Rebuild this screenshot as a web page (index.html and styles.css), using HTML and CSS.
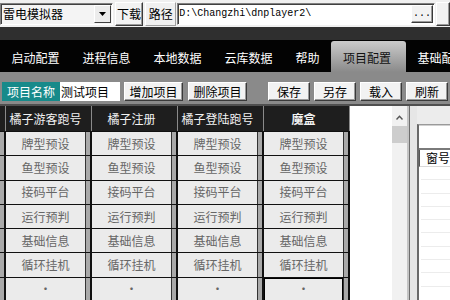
FILE: index.html
```html
<!DOCTYPE html>
<html>
<head>
    <meta charset="utf-8">
    <title>项目配置</title>
    <link rel="stylesheet" href="styles.css">
</head>
<body>
    <div class="topbar">
        <div class="combo">
            <span class="combo-text">雷电模拟器</span>
            <span class="combo-btn"><svg width="7" height="4" viewBox="0 0 7 4"><path d="M0 0H7L3.5 4Z" fill="#000"/></svg></span>
        </div>
        <button class="btn btn-dl">下载</button>
        <span class="path-label">路径</span>
        <div class="path">
            <span class="path-text">D:\Changzhi\dnplayer2\</span>
            <button class="btn btn-dots">...</button>
        </div>
        <button class="btn btn-more"></button>
    </div>
    <div class="band"></div>
    <div class="tabs">
        <div class="tab">启动配置</div>
        <div class="tab">进程信息</div>
        <div class="tab">本地数据</div>
        <div class="tab">云库数据</div>
        <div class="tab">帮助</div>
        <div class="tab active">项目配置</div>
        <div class="tab">基础配置</div>
    </div>
    <div class="toolbar">
        <span class="name-label">项目名称</span>
        <div class="name-input">测试项目</div>
        <button class="btn tb-btn">增加项目</button>
        <button class="btn tb-btn del">删除项目</button>
        <button class="btn tb-btn sm first">保存</button>
        <button class="btn tb-btn sm">另存</button>
        <button class="btn tb-btn sm">载入</button>
        <button class="btn tb-btn sm">刷新</button>
    </div>
    <div class="main">
        <div class="grid">
            <div class="row head">
                <div class="edge"></div>
                <div class="hcell">橘子游客跑号</div>
                <div class="hcell">橘子注册</div>
                <div class="hcell">橘子登陆跑号</div>
                <div class="hcell bold">魔盒</div>
            </div>
            <div class="row">
                <div class="edge"></div>
                <div class="cell"><div class="face">牌型预设</div></div>
                <div class="cell"><div class="face">牌型预设</div></div>
                <div class="cell"><div class="face">牌型预设</div></div>
                <div class="cell"><div class="face">牌型预设</div></div>
            </div>
            <div class="row">
                <div class="edge"></div>
                <div class="cell"><div class="face">鱼型预设</div></div>
                <div class="cell"><div class="face">鱼型预设</div></div>
                <div class="cell"><div class="face">鱼型预设</div></div>
                <div class="cell"><div class="face">鱼型预设</div></div>
            </div>
            <div class="row">
                <div class="edge"></div>
                <div class="cell"><div class="face">接码平台</div></div>
                <div class="cell"><div class="face">接码平台</div></div>
                <div class="cell"><div class="face">接码平台</div></div>
                <div class="cell"><div class="face">接码平台</div></div>
            </div>
            <div class="row">
                <div class="edge"></div>
                <div class="cell"><div class="face">运行预判</div></div>
                <div class="cell"><div class="face">运行预判</div></div>
                <div class="cell"><div class="face">运行预判</div></div>
                <div class="cell"><div class="face">运行预判</div></div>
            </div>
            <div class="row">
                <div class="edge"></div>
                <div class="cell"><div class="face">基础信息</div></div>
                <div class="cell"><div class="face">基础信息</div></div>
                <div class="cell"><div class="face">基础信息</div></div>
                <div class="cell"><div class="face">基础信息</div></div>
            </div>
            <div class="row">
                <div class="edge"></div>
                <div class="cell"><div class="face">循环挂机</div></div>
                <div class="cell"><div class="face">循环挂机</div></div>
                <div class="cell"><div class="face">循环挂机</div></div>
                <div class="cell"><div class="face">循环挂机</div></div>
            </div>
            <div class="row">
                <div class="edge"></div>
                <div class="cell"><div class="face">·</div></div>
                <div class="cell"><div class="face">·</div></div>
                <div class="cell"><div class="face">·</div></div>
                <div class="cell"><div class="face focus">·</div></div>
            </div>
        </div>
        <div class="blank"></div>
        <div class="vscroll">
            <div class="arrow"><svg width="7" height="5" viewBox="0 0 7 5"><path d="M0.5 4.5L3.5 1.2L6.5 4.5" fill="none" stroke="#555" stroke-width="1.4"/></svg></div>
            <div class="thumb"></div>
        </div>
        <div class="splitter"></div>
        <div class="side">
            <div class="side-box">
                <div class="side-input"></div>
                <div class="list-head">窗号</div>
                <div class="list">
                    <div class="li"></div>
                    <div class="li"></div>
                    <div class="li"></div>
                    <div class="li"></div>
                    <div class="li"></div>
                    <div class="li"></div>
                    <div class="li"></div>
                    <div class="li"></div>
                    <div class="li"></div>
                </div>
            </div>
        </div>
    </div>
</body>
</html>
```
FILE: styles.css
```css
* {
    box-sizing: border-box;
}

html,
body {
    margin: 0;
    padding: 0;
    overflow: hidden;
}

body {
    width: 450px;
    height: 300px;
    background: #f0f0f0;
    color: #000;
    font: 12px/1 "Noto Sans CJK SC", sans-serif;
}

/* 顶部：模拟器 / 路径 */
.topbar {
    display: flex;
    align-items: center;
    height: 27px;
    background: #f0f0f0;
}

.combo {
    display: flex;
    align-items: center;
    width: 113px;
    height: 22px;
    padding-left: 2px;
    background: #f4f4f4;
    border: 1px solid;
    border-color: #808080 #fff #fff #808080;
    box-shadow: inset 1px 1px #404040;
}

.combo-text {
    flex: 1;
}

.combo-btn {
    display: flex;
    align-items: center;
    justify-content: center;
    width: 17px;
    height: 18px;
    margin-right: 1px;
    background: #ececec;
    border: 1px solid;
    border-color: #fff #404040 #404040 #fff;
}

.btn {
    padding: 0;
    color: #000;
    font: 12px/1 "Noto Sans CJK SC", sans-serif;
    background: #f2f2f2;
    border: 1px solid;
    border-color: #fff #3a3a3a #3a3a3a #fff;
    box-shadow: inset -1px -1px #9a9a9a;
}

.btn-dl {
    width: 29px;
    height: 24px;
    margin-left: 2px;
}

.path-label {
    display: flex;
    align-items: center;
    justify-content: center;
    width: 31px;
    height: 24px;
    margin-left: 2px;
    border: 1px solid;
    border-color: #fff #a0a0a0 #a0a0a0 #fff;
}

.path {
    display: flex;
    align-items: center;
    width: 259px;
    height: 22px;
    margin-left: 1px;
    padding-left: 1px;
    background: #fff;
    border: 1px solid;
    border-color: #808080 #fff #fff #808080;
    box-shadow: inset 1px 1px #404040;
}

.path-text {
    flex: 1;
    font: 10px/1 "Liberation Mono", monospace;
}

.btn-dots {
    width: 22px;
    height: 18px;
    margin-right: 1px;
    font: 10px/1 "Liberation Mono", monospace;
}

.btn-more {
    width: 14px;
    height: 24px;
    margin-left: 1px;
}

/* 标签栏 */
.band {
    height: 13px;
    background: #2f2f2f;
}

.tabs {
    display: flex;
    height: 32px;
    padding-top: 1px;
    background: #030303;
}

.tab {
    display: flex;
    align-items: center;
    padding: 2px 11.5px 0;
    color: #fff;
    white-space: nowrap;
}

.tab.active {
    padding: 2px 15px 0 12px;
    color: #111;
    background: linear-gradient(#cbcbcb, #8a8a8a);
    border-radius: 3px 3px 0 0;
}

/* 项目工具条 */
.toolbar {
    display: flex;
    height: 32px;
    padding-top: 10px;
    background: #8a8a8a;
    white-space: nowrap;
}

.name-label {
    display: flex;
    align-items: center;
    justify-content: center;
    width: 58px;
    height: 19px;
    margin-left: 2px;
    color: #fff;
    background: #178a8a;
}

.name-input {
    display: flex;
    align-items: center;
    width: 60px;
    height: 19px;
    padding-left: 1px;
    background: #fff;
}

.tb-btn {
    flex: none;
    width: 59px;
    height: 19px;
    margin-left: 4px;
}

.tb-btn.del {
    margin-left: 5px;
}

.tb-btn.sm {
    width: 42px;
}

.tb-btn.first {
    margin-left: 21px;
}

/* 主区域 */
.main {
    display: flex;
    height: 196px;
    background: #fff;
    border-top: 2px solid #4f4f4f;
}

.grid {
    flex: none;
    width: 350px;
}

.row {
    display: flex;
    height: 24.3px;
    border-bottom: 1px solid #111;
}

.row.head {
    height: 26px;
    background: #1e1e1e;
}

.edge {
    width: 6px;
    background: #a9a9a9;
    border-right: 2px solid #111;
}

.head .edge {
    background: #1e1e1e;
    border-right: 1px solid #8a8a8a;
}

.hcell {
    display: flex;
    align-items: center;
    justify-content: center;
    width: 86px;
    padding-right: 6px;
    color: #f2f2f2;
    border-right: 1px solid #8a8a8a;
}

.hcell.bold {
    font-weight: bold;
}

.cell {
    display: flex;
    width: 86px;
    background: #a9a9a9;
    border-right: 2px solid #111;
}

.face {
    display: flex;
    align-items: center;
    justify-content: center;
    width: 80px;
    color: #666;
    background: #ebebeb;
    border-right: 1px solid #333;
}

.face.focus {
    box-shadow: inset 0 0 0 1px #000;
}

.blank {
    width: 45px;
}

.vscroll {
    display: flex;
    flex-direction: column;
    align-items: center;
    width: 16px;
    background: #f1f1f1;
}

.arrow {
    display: flex;
    align-items: center;
    justify-content: center;
    height: 20px;
    padding-top: 2px;
}

.thumb {
    width: 15px;
    height: 17px;
    background: #cdcdcd;
}

.splitter {
    width: 10px;
    background: #e6e6e6;
    border-left: 2px solid #c4c4c4;
    box-shadow: inset 1px 0 #6e6e6e;
}

.side {
    flex: 1;
    padding-top: 18px;
    background: #ececec;
}

.side-box {
    height: 100%;
    background: #fff;
    border-top: 1px solid #9a9a9a;
    border-left: 2px solid #6a6a6a;
}

.side-input {
    height: 25px;
    border-top: 1px solid #d0d0d0;
    border-bottom: 2px solid #7a7a7a;
}

.list-head {
    display: flex;
    align-items: center;
    height: 17px;
    padding-left: 6px;
    border-left: 1px solid #555;
    border-bottom: 1px solid #d8d8d8;
    white-space: nowrap;
}

.li {
    height: 13.3px;
    margin-left: 2px;
    border-bottom: 1px solid #ececec;
}
```
